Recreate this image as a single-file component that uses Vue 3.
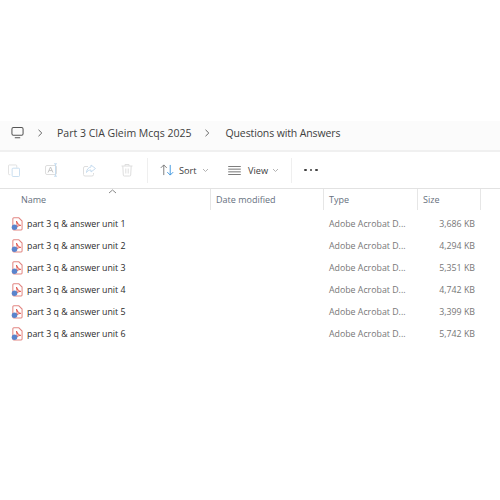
<template>
  <div class="explorer">
    <div class="crumbs">
      <svg class="pc" width="13" height="13" viewBox="0 0 14 14" fill="none" stroke="#555" stroke-width="1.1">
        <rect x="1" y="1.5" width="12" height="8.5" rx="1.6" />
        <path d="M4.5 12.6h5" stroke-linecap="round" />
      </svg>
      <svg class="chev first" width="6" height="8" viewBox="0 0 6 8" fill="none" stroke="#666" stroke-width="1"><path d="M1.5 .8 4.8 4 1.5 7.2" /></svg>
      <span class="crumb">Part 3 CIA Gleim Mcqs 2025</span>
      <svg class="chev second" width="6" height="8" viewBox="0 0 6 8" fill="none" stroke="#666" stroke-width="1"><path d="M1.5 .8 4.8 4 1.5 7.2" /></svg>
      <span class="crumb last">Questions with Answers</span>
    </div>

    <div class="toolbar">
      <div class="disabled-tools">
        <svg width="12" height="13" viewBox="0 0 13 14" fill="none" stroke-width="1">
          <path d="M2.5 11.5h-1a1 1 0 0 1-1-1V2a1 1 0 0 1 1-1h7a1 1 0 0 1 1 1v2" stroke="#dedede" />
          <rect x="4.5" y="4.5" width="8" height="9" rx="1" stroke="#c6dcef" />
        </svg>
        <svg width="13" height="14" viewBox="0 0 13 14" fill="none" stroke-width="1">
          <rect x=".5" y="2.5" width="11" height="9" rx="1.5" stroke="#dedede" />
          <path d="M3 9.5 5.5 4l2.500 5.500M4 7.600h3" stroke="#c6c6c6" />
          <path d="M10.500 .8v12.400M9 .8h3M9 13.200h3" stroke="#c6dcef" />
        </svg>
        <svg width="13" height="13" viewBox="0 0 13 13" fill="none" stroke-width="1">
          <path d="M5 2.500H2A1.500 1.500 0 0 0 .5 4v6.500A1.500 1.500 0 0 0 2 12h7a1.500 1.500 0 0 0 1.500-1.500V9" stroke="#dedede" />
          <path d="M8 1l4.500 3.500L8 8V6C6 6 4.500 6.800 3.500 8.500 3.700 5.500 5.500 3.300 8 3z" stroke="#c6dcef" />
        </svg>
        <svg width="12" height="14" viewBox="0 0 12 14" fill="none" stroke="#dedede" stroke-width="1">
          <path d="M.5 3h11M4 3V1.500h4V3M1.800 3l.5 9a1 1 0 0 0 1 1h5.400a1 1 0 0 0 1-1l.5-9M4.800 5.500v5M7.200 5.500v5" />
        </svg>
      </div>
      <div class="sep first-sep"></div>
      <button class="tool sort">
        <svg width="14" height="12" viewBox="0 0 15 13" fill="none" stroke-width="1">
          <path d="M4 12V1M.8 4.200 4 1l3.200 3.200" stroke="#777" />
          <path d="M11 1v11M7.800 8.800 11 12l3.200-3.200" stroke="#3b95de" />
        </svg>
        <span>Sort</span>
        <svg class="caret" width="7" height="5" viewBox="0 0 7 5" fill="none" stroke="#aaa" stroke-width=".9"><path d="M1 1l2.500 2.500L6 1" /></svg>
      </button>
      <button class="tool view">
        <svg width="13" height="9" viewBox="0 0 14 10" fill="none" stroke="#666" stroke-width="1"><path d="M0 .5h14M0 3.500h14M0 6.500h14M0 9.500h14" /></svg>
        <span>View</span>
        <svg class="caret" width="7" height="5" viewBox="0 0 7 5" fill="none" stroke="#aaa" stroke-width=".9"><path d="M1 1l2.500 2.500L6 1" /></svg>
      </button>
      <div class="sep"></div>
      <div class="more"><i></i><i></i><i></i></div>
    </div>

    <div class="thead">
      <div class="col name">Name<svg class="up" width="9" height="5" viewBox="0 0 9 5" fill="none" stroke="#888" stroke-width="1"><path d="M1 4l3.500-3L8 4" /></svg></div>
      <div class="col date">Date modified</div>
      <div class="col type">Type</div>
      <div class="col size">Size</div>
    </div>

    <div class="rows">
      <div v-for="file in files" :key="file.name" class="row">
        <div class="file-name">
          <svg width="12" height="14" viewBox="0 0 13 15">
            <path d="M3 .8h5.500L12 4.300V13a1 1 0 0 1-1 1H3a1 1 0 0 1-1-1V1.800a1 1 0 0 1 1-1z" fill="#fff" stroke="#e28682" stroke-width="1.1" />
            <path d="M6 4.500c1 2.500 2 4 4.500 4.500-2 .2-3.500.7-4.500 2 .6-2 .8-4 0-6.500z" fill="none" stroke="#d9352c" stroke-width=".9" />
            <circle cx="3.800" cy="11" r="3" fill="#5a84cc" />
          </svg>
          <span>{{ file.name }}</span>
        </div>
        <div class="file-type">Adobe Acrobat D...</div>
        <div class="file-size">{{ file.size }}</div>
      </div>
    </div>
  </div>
</template>

<script setup>
const files = [
  { name: 'part 3 q & answer unit 1', size: '3,686 KB' },
  { name: 'part 3 q & answer unit 2', size: '4,294 KB' },
  { name: 'part 3 q & answer unit 3', size: '5,351 KB' },
  { name: 'part 3 q & answer unit 4', size: '4,742 KB' },
  { name: 'part 3 q & answer unit 5', size: '3,399 KB' },
  { name: 'part 3 q & answer unit 6', size: '5,742 KB' }
]
</script>

<style>
html,
body {
  margin: 0;
  background: #fff;
}
</style>

<style scoped>
.explorer {
  width: 500px;
  height: 500px;
  padding-top: 121px;
  box-sizing: border-box;
  font-family: "Open Sans", "Noto Sans", sans-serif;
  background: #fff;
  overflow: hidden;
}

.crumbs {
  height: 23px;
  padding: 0 0 6px 11px;
  display: flex;
  align-items: center;
  background: #fbfbfb;
  border-bottom: 2px solid #f0f0f0;
  color: #404040;
  font-size: 10.5px;
}

.chev.first {
  margin: 0 14px 0 13px;
}

.chev.second {
  margin: 0 15px 0 13px;
}

.crumb.last {
  letter-spacing: -0.12px;
}

.toolbar {
  height: 36px;
  display: flex;
  align-items: center;
  border-bottom: 1px solid #e2e2e2;
}

.disabled-tools {
  width: 134px;
  padding-left: 8px;
  box-sizing: border-box;
  display: flex;
  gap: 25px;
  align-items: center;
}

.sep {
  width: 1px;
  height: 25px;
  background: #efefef;
}

.first-sep {
  margin: 0 12px 0 13px;
}

.tool {
  display: flex;
  align-items: center;
  padding: 0;
  border: 0;
  background: none;
  font: inherit;
  font-size: 9.2px;
  color: #404040;
}

.sort {
  width: 68px;
}

.sort span {
  margin: 0 5px 0 5px;
}

.view {
  width: 63px;
}

.view span {
  margin: 0 4px 0 7px;
}

.more {
  display: flex;
  gap: 3px;
  margin-left: 12px;
}

.more i {
  width: 2.5px;
  height: 2.5px;
  border-radius: 50%;
  background: #404040;
}

.thead {
  height: 21px;
  display: flex;
  color: #66707e;
  font-size: 9px;
}

.col {
  height: 21px;
  line-height: 21px;
  padding-left: 5px;
  box-sizing: border-box;
  border-right: 1px solid #e6e6e6;
  position: relative;
}

.col.name {
  width: 211px;
  padding-left: 21px;
}

.col.date {
  width: 113px;
}

.col.type {
  width: 94px;
}

.col.size {
  width: 63px;
}

.up {
  position: absolute;
  left: 108px;
  top: 0;
}

.rows {
  padding-top: 3px;
}

.row {
  height: 22px;
  display: flex;
  align-items: center;
  font-size: 8.8px;
}

.file-name {
  width: 329px;
  display: flex;
  align-items: center;
  gap: 4px;
  padding-left: 11px;
  box-sizing: border-box;
  color: #2b2b2b;
}

.file-type {
  width: 96px;
  color: #777;
}

.file-size {
  width: 50px;
  text-align: right;
  color: #777;
}
</style>
